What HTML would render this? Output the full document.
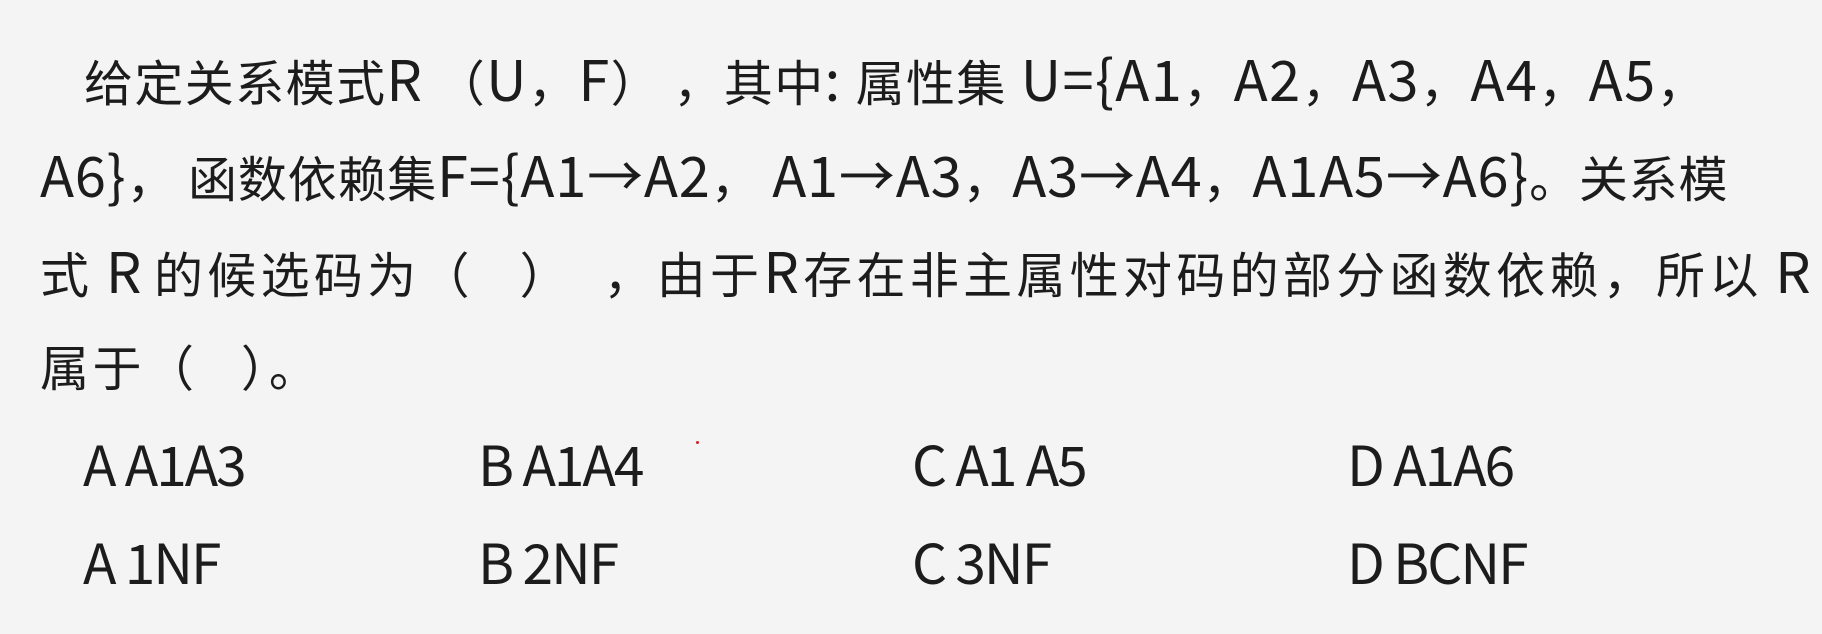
<!DOCTYPE html>
<html><head><meta charset="utf-8"><style>
html,body{margin:0;padding:0;}
body{width:1822px;height:634px;background:#f4f4f4;position:relative;overflow:hidden;
font-family:"Noto Sans CJK SC","Liberation Sans",sans-serif;color:#1c1c1c;}
.l{position:absolute;white-space:pre;font-size:49px;line-height:80px;height:80px;}
.e{font-size:56px;}
.o{position:absolute;white-space:pre;font-size:55px;letter-spacing:-2px;line-height:80px;height:80px;}
.dot{position:absolute;left:696px;top:441px;width:3px;height:3px;border-radius:50%;background:#d0202a;}
</style></head><body>
<div class="l" style="left:84px;top:38px;letter-spacing:1.4px">给定关系模式<span class="e">R</span> （<span class="e">U</span>，<span class="e">F</span>） ，其中<span class="e">: </span>属性集<span class="e"> U={A1</span>，<span class="e">A2</span>，<span class="e">A3</span>，<span class="e">A4</span>，<span class="e">A5</span>，</div>
<div class="l" style="left:40px;top:134px;letter-spacing:0.8px"><span class="e">A6}</span>， 函数依赖集<span class="e">F={A1→A2</span>， <span class="e">A1→A3</span>，<span class="e">A3→A4</span>，<span class="e">A1A5→A6}</span>。关系模</div>
<div class="l" style="left:40px;top:230px;letter-spacing:4.3px">式<span class="e" style="letter-spacing:0"> R </span>的候选码为（   ）  ，由于<span class="e">R</span>存在非主属性对码的部分函数依赖，所以<span class="e" style="letter-spacing:0"> R</span></div>
<div class="l" style="left:40px;top:326px;letter-spacing:3.5px">属于（   ）。</div>
<div class="o" style="left:83px;top:422px">A A1A3</div>
<div class="o" style="left:478px;top:422px">B A1A4</div>
<div class="o" style="left:912px;top:422px">C A1 A5</div>
<div class="o" style="left:1347px;top:422px">D A1A6</div>
<div class="o" style="left:83px;top:520px">A 1NF</div>
<div class="o" style="left:478px;top:520px">B 2NF</div>
<div class="o" style="left:912px;top:520px">C 3NF</div>
<div class="o" style="left:1347px;top:520px">D BCNF</div>
<div class="dot"></div>
</body></html>
